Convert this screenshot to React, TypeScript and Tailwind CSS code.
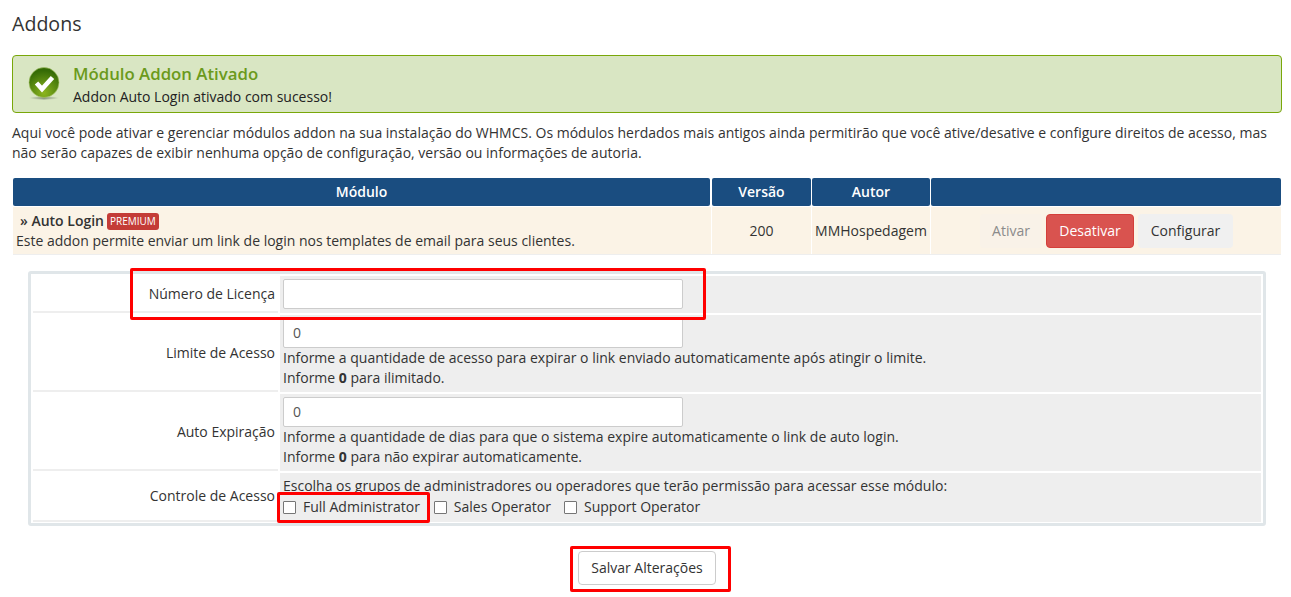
const font = { fontFamily: '"Open Sans", "Noto Sans", sans-serif' };

function Check({ label, className = "" }: { label: string; className?: string }) {
  return (
    <label className={`flex items-center ${className}`}>
      <span className="w-[13px] h-[13px] bg-white border border-[#767676] rounded-[1px] mr-[7px]" />
      <span>{label}</span>
    </label>
  );
}

function Row({ label, children, h, labelPt = "" }: { label: string; children: React.ReactNode; h: string; labelPt?: string }) {
  return (
    <div className={`flex ${h} mb-[2px]`}>
      <div className={`w-[245px] mr-[2px] shrink-0 flex items-center justify-end pr-[3px] border-b-2 border-[#eeeeee] ${labelPt}`}>{label}</div>
      <div className="flex-1 bg-[#eeeeee] pl-[3px]">{children}</div>
    </div>
  );
}

const Input = ({ value = "" }: { value?: string }) => (
  <div className="w-[400px] h-[30px] bg-white border border-[#cccccc] rounded-[2px] px-[9px] flex items-center text-[14px] text-[#555]">{value}</div>
);

export default function App() {
  return (
    <div style={font} className="relative w-[1291px] h-[597px] overflow-hidden bg-white text-[14px] leading-[20px] text-[#333] px-3">
      <h1 className="text-[19.6px] leading-[24px] pt-[12px] text-[#333] h-[55px]">Addons</h1>

      <div className="h-[58px] w-[1270px] bg-[#d9e6c3] border border-[#79a70a] rounded-[4px] flex items-center pl-[15px]">
        <svg width="32" height="34" viewBox="0 0 32 34" className="shrink-0 mr-[13px]">
          <defs>
            <radialGradient id="g" cx="50%" cy="85%" r="75%">
              <stop offset="0%" stopColor="#8cb51f" />
              <stop offset="100%" stopColor="#356b06" />
            </radialGradient>
            <linearGradient id="s" x1="0" x2="1" y1="0" y2="0">
              <stop offset="0%" stopColor="#d9e6c3" />
              <stop offset="50%" stopColor="#8d9a80" />
              <stop offset="100%" stopColor="#d9e6c3" />
            </linearGradient>
          </defs>
          <ellipse cx="16" cy="31" rx="15" ry="1.5" fill="url(#s)" />
          <circle cx="16" cy="15.5" r="15" fill="url(#g)" stroke="#a9c66a" strokeWidth="0.6" />
          <path d="M8.5 16 L14 22 L24.5 10.5" fill="none" stroke="#ffffff" strokeWidth="4.6" />
        </svg>
        <div>
          <div className="text-[16.8px] leading-[26px] font-semibold text-[#6b9a1c]">Módulo Addon Ativado</div>
          <div className="text-[14px] leading-[20px] text-[#222]">Addon Auto Login ativado com sucesso!</div>
        </div>
      </div>

      <p className="mt-[10px] w-[1270px] text-[14px] leading-[20px]">
        Aqui você pode ativar e gerenciar módulos addon na sua instalação do WHMCS. Os módulos herdados mais antigos ainda permitirão que você ative/desative e configure direitos de acesso, mas não serão capazes de exibir nenhuma opção de configuração, versão ou informações de autoria.
      </p>

      <div className="ml-px w-[1268px] mt-[15px]">
        <div className="flex h-[28px] text-white font-semibold text-center leading-[28px] gap-[1px]">
          <div className="w-[697px] bg-[#1a4d80] rounded-[2px]">Módulo</div>
          <div className="w-[99px] ml-px bg-[#1a4d80] rounded-[2px]">Versão</div>
          <div className="w-[118px] bg-[#1a4d80] rounded-[2px]">Autor</div>
          <div className="flex-1 bg-[#1a4d80] rounded-[2px]"></div>
        </div>
        <div className="flex h-[48px] mt-px bg-[#fbf3e6] border-b border-[#eeeeee]">
          <div className="w-[698px] pl-[3px] pt-[4px]">
            <div className="flex items-center h-[20px]">
              <span className="font-semibold ml-[4px]">» Auto Login</span>
              <span className="ml-[3px] bg-[#c43c37] text-white rounded-[3px] text-[10px] leading-[17px] h-[17px] px-[3px]">PREMIUM</span>
            </div>
            <div>Este addon permite enviar um link de login nos templates de email para seus clientes.</div>
          </div>
          <div className="w-[100px] border-l border-white flex items-center justify-center">200</div>
          <div className="w-[119px] border-l border-white flex items-center justify-center">MMHospedagem</div>
          <div className="flex-1 border-l border-white flex items-center pl-[49px] gap-[4px]">
            <div className="w-[62px] h-[34px] bg-[#f9f2e8] rounded-[4px] flex items-center justify-center text-[#8b8b8b]">Ativar</div>
            <div className="w-[88px] h-[34px] bg-[#d9534f] border border-[#d43f3a] rounded-[4px] flex items-center justify-center text-white">Desativar</div>
            <div className="w-[95px] h-[34px] bg-[#f0f0f0] rounded-[4px] flex items-center justify-center">Configurar</div>
          </div>
        </div>
      </div>

      <div className="ml-[16px] mt-[16px] w-[1238px] h-[255px] border-[3px] border-[#e0e6e9] rounded-[3px] p-[2px] pt-[2px]">
        <Row label="Número de Licença" h="h-[37px]" labelPt="pt-[1px]">
          <div className="pt-[3px]"><Input /></div>
        </Row>
        <Row label="Limite de Acesso" h="h-[77px]">
          <div className="pt-[3px]">
            <Input value="0" />
            <div>Informe a quantidade de acesso para expirar o link enviado automaticamente após atingir o limite.</div>
            <div>Informe <b className="font-bold">0</b> para ilimitado.</div>
          </div>
        </Row>
        <Row label="Auto Expiração" h="h-[77px]">
          <div className="pt-[3px]">
            <Input value="0" />
            <div>Informe a quantidade de dias para que o sistema expire automaticamente o link de auto login.</div>
            <div>Informe <b className="font-bold">0</b> para não expirar automaticamente.</div>
          </div>
        </Row>
        <Row label="Controle de Acesso" h="h-[49px]" labelPt="pb-[2px]">
          <div className="pt-[3px]">Escolha os grupos de administradores ou operadores que terão permissão para acessar esse módulo:</div>
          <div className="flex gap-[14px] pt-[1px]">
            <Check label="Full Administrator" />
            <Check label="Sales Operator" />
            <Check label="Support Operator" className="-ml-[1px]" />
          </div>
        </Row>
      </div>

      <div className="flex justify-center w-[1238px] ml-[16px] mt-[25px]">
        <div className="w-[138px] h-[34px] border border-[#cccccc] rounded-[4px] bg-white flex items-center justify-center">Salvar Alterações</div>
      </div>

      <div className="absolute left-[130px] top-[268px] w-[576px] h-[52px] border-[3px] border-[#ff0000] rounded-[2px]" />
      <div className="absolute left-[277px] top-[492px] w-[153px] h-[31px] border-[3px] border-[#ff0000] rounded-[2px]" />
      <div className="absolute left-[570px] top-[546px] w-[161px] h-[46px] border-[3px] border-[#ff0000] rounded-[2px]" />
    </div>
  );
}
